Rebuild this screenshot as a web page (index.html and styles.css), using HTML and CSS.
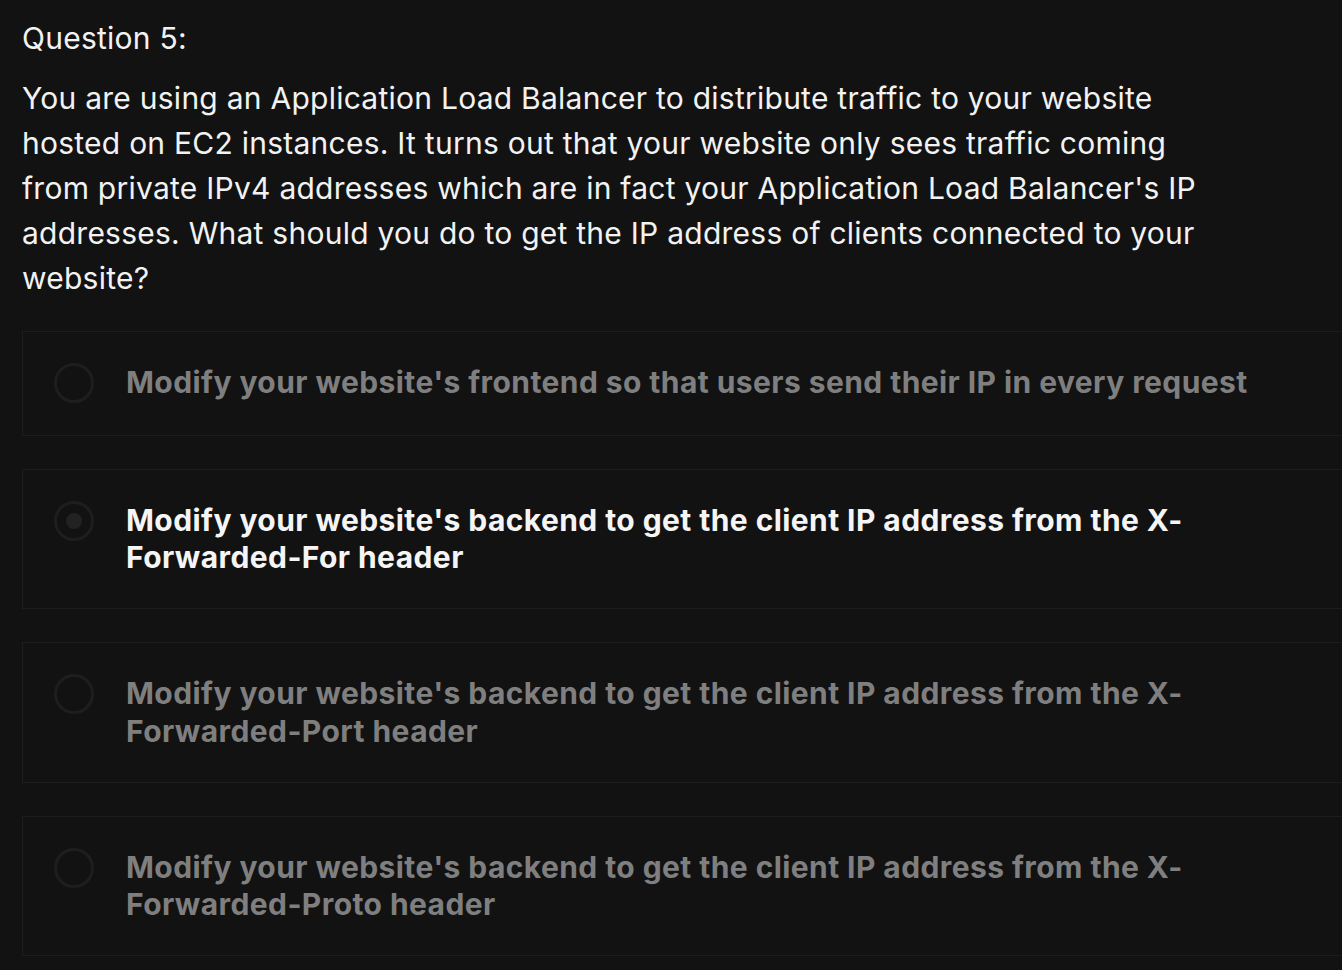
FILE: index.html
```html
<!DOCTYPE html>
<html>
<head>
<meta charset="utf-8">
<link rel="stylesheet" href="styles.css">
</head>
<body>
<div class="page">
  <div class="q-title">Question 5:</div>
  <p class="q-text">You are using an Application Load Balancer to distribute traffic to your website hosted on EC2 instances. It turns out that your website only sees traffic coming from private IPv4 addresses which are in fact your Application Load Balancer's IP addresses. What should you do to get the IP address of clients connected to your website?</p>
  <div class="options">
    <div class="option">
      <span class="radio"></span>
      <span class="label">Modify your website's frontend so that users send their IP in every request</span>
    </div>
    <div class="option selected">
      <span class="radio"><span class="dot"></span></span>
      <span class="label">Modify your website's backend to get the client IP address from the X-Forwarded-For header</span>
    </div>
    <div class="option">
      <span class="radio"></span>
      <span class="label">Modify your website's backend to get the client IP address from the X-Forwarded-Port header</span>
    </div>
    <div class="option">
      <span class="radio"></span>
      <span class="label">Modify your website's backend to get the client IP address from the X-Forwarded-Proto header</span>
    </div>
  </div>
</div>
</body>
</html>
```
FILE: styles.css
```css
html, body {
  margin: 0;
  padding: 0;
  background: #121212;
  overflow: hidden;
}
body {
  font-family: Inter, "Noto Sans", sans-serif;
  color: #f2f2f2;
}
.page {
  padding: 16px 0 0 22px;
}
.q-title {
  font-size: 30px;
  line-height: 45px;
  font-weight: 400;
  letter-spacing: 0.25px;
}
.q-text {
  margin: 15px 0 0 0;
  width: 1215px;
  font-size: 30px;
  line-height: 45px;
  font-weight: 400;
  letter-spacing: 0.25px;
}
.options {
  margin-top: 30px;
  display: flex;
  flex-direction: column;
  gap: 33px;
}
.option {
  width: 1360px;
  box-sizing: border-box;
  border: 1px solid #1d1d1d;
  padding: 32px 0 31.5px 31px;
  display: flex;
  align-items: flex-start;
  gap: 32px;
}
.radio {
  flex: none;
  width: 40px;
  height: 40px;
  margin-top: -1px;
  box-sizing: border-box;
  border: 3px solid #1e1e1e;
  border-radius: 50%;
  display: flex;
  align-items: center;
  justify-content: center;
}
.dot {
  width: 16px;
  height: 16px;
  border-radius: 50%;
  background: #222222;
}
.label {
  font-size: 30px;
  line-height: 37.5px;
  font-weight: 700;
  letter-spacing: 0.42px;
  color: #7f7f7f;
  width: 1145px;
}
.selected .label {
  color: #f5f5f5;
}
```
